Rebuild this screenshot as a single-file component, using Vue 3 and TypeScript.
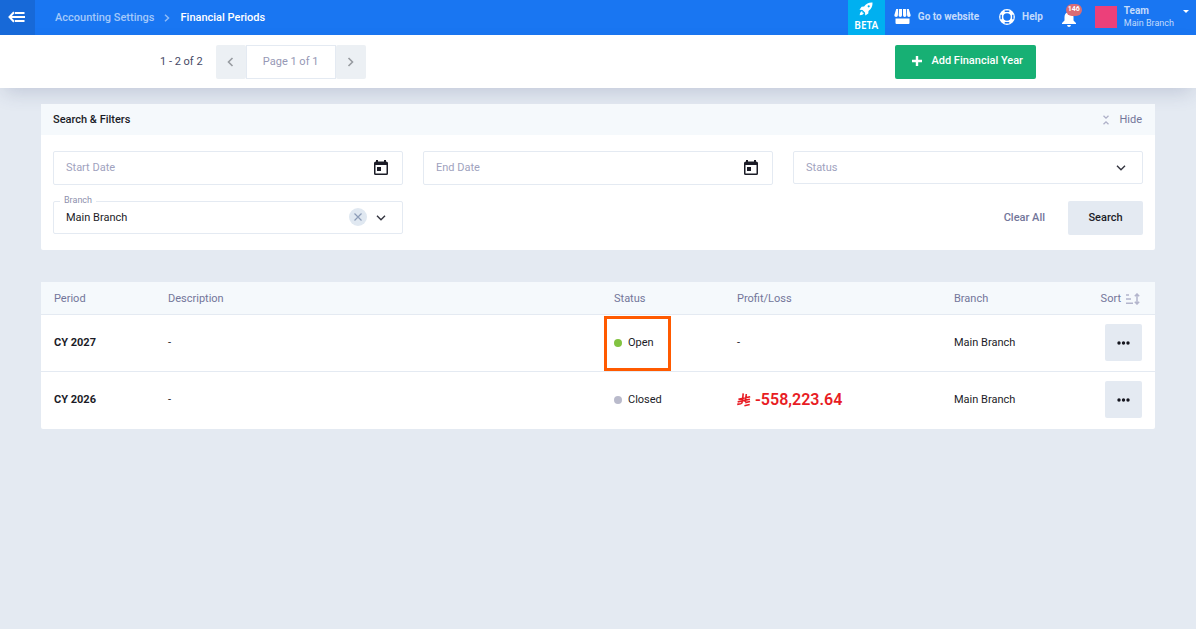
<script setup lang="ts">
import { ref } from 'vue'

interface Period {
  name: string
  description: string
  status: 'Open' | 'Closed'
  amount: string | null
  branch: string
  highlighted: boolean
}

const periods: Period[] = [
  { name: 'CY 2027', description: '-', status: 'Open', amount: null, branch: 'Main Branch', highlighted: true },
  { name: 'CY 2026', description: '-', status: 'Closed', amount: '-558,223.64', branch: 'Main Branch', highlighted: false },
]

const startDate = ref('')
const endDate = ref('')
const status = ref('')
const branch = ref('main')

function clearAll(): void {
  startDate.value = ''
  endDate.value = ''
  status.value = ''
  branch.value = ''
}
</script>

<template>
  <div class="page">
    <header class="topbar">
      <button class="menu" type="button" aria-label="Collapse menu">
        <svg width="17" height="12" viewBox="0 0 17 12" fill="none" stroke="#fff" stroke-width="2">
          <path d="M6 1.200 1.500 6 6 10.800M1.500 6H17M7 2h9.500M7 10h9.500" />
        </svg>
      </button>
      <nav class="crumbs" aria-label="Breadcrumb">
        <a href="#settings">Accounting Settings</a>
        <svg width="6" height="8" viewBox="0 0 6 8" fill="none" stroke="#8fbcf9" stroke-width="1.500">
          <path d="m1 .8 3.500 3.200L1 7.200" />
        </svg>
        <span class="current">Financial Periods</span>
      </nav>
      <a class="beta" href="#beta">
        <svg width="14" height="14" viewBox="0 0 14 14" fill="#fff">
          <path fill-rule="evenodd" d="M13.500.5c.2 3.600-1 6.300-4 8.400l-.2 2.500-3 2.100-.3-3L3.500 8l-3-.3 2.100-3 2.500-.2C7.200 1.500 9.900.3 13.500.5ZM9.700 3.200a1.100 1.100 0 1 0 0 2.200 1.100 1.100 0 0 0 0-2.200Z" />
          <path d="M2.800 9.200c-1.300.5-1.900 1.900-2.100 4.100 2.200-.2 3.600-.8 4.100-2.100l-.8-.8-1.200 1 1-1.300Z" />
        </svg>
        <span>BETA</span>
      </a>
      <a class="link site" href="#website">
        <svg width="17" height="15" viewBox="0 0 17 15" fill="#fff">
          <path d="M2.200 0H4.200L3.900 6.300a1.750 1.750 0 0 1-3.600 0ZM5.100 0h2.900v6.300a1.700 1.700 0 0 1-3.400 0ZM9 0h2.900l.5 6.300a1.700 1.700 0 0 1-3.400 0ZM12.800 0h2l1.900 6.300a1.750 1.750 0 0 1-3.600 0Z" />
          <path d="M1.500 9.500h14V14q0 1-1 1h-12q-1 0-1-1Z" />
        </svg>
        <span>Go to website</span>
      </a>
      <a class="link help" href="#help">
        <svg width="16" height="16" viewBox="0 0 16 16">
          <circle cx="8" cy="8" r="5.800" fill="none" stroke="#fff" stroke-width="4.200" />
          <path d="M5.700 2.200h4.600M5.700 13.800h4.600M2.200 5.700v4.600M13.800 5.700v4.600" stroke="#1976f2" stroke-width="1.400" />
        </svg>
        <span>Help</span>
      </a>
      <button class="bell" type="button" aria-label="Notifications">
        <svg width="16" height="16" viewBox="0 0 16 16" fill="#fff">
          <path d="M8 0q1.200 0 1.200 1.300C11.500 2 12.500 3.800 12.500 6v3.500L15 12v1H1v-1l2.500-2.500V6c0-2.200 1-4 3.300-4.700Q6.800 0 8 0ZM6 14h4q-.4 2-2 2t-2-2Z" />
        </svg>
        <span class="count">146</span>
      </button>
      <button class="account" type="button">
        <span class="avatar"></span>
        <span class="who"><b>Team</b><span>Main Branch</span></span>
        <svg width="6" height="3" viewBox="0 0 6 3" fill="#fff"><path d="M0 0h6L3 3Z" /></svg>
      </button>
    </header>

    <div class="toolbar">
      <span class="range">1 - 2 of 2</span>
      <div class="pager">
        <button type="button" aria-label="Previous page">
          <svg width="7" height="10" viewBox="0 0 7 10" fill="none" stroke="#979ba0" stroke-width="1.600"><path d="M5.500 1 1.500 5l4 4" /></svg>
        </button>
        <span>Page 1 of 1</span>
        <button type="button" aria-label="Next page">
          <svg width="7" height="10" viewBox="0 0 7 10" fill="none" stroke="#979ba0" stroke-width="1.600"><path d="m1.500 1 4 4-4 4" /></svg>
        </button>
      </div>
      <button class="add" type="button">
        <svg width="10" height="10" viewBox="0 0 10 10" stroke="#fff" stroke-width="2.400"><path d="M5 0v10M0 5h10" /></svg>
        Add Financial Year
      </button>
    </div>

    <main>
      <section class="card">
        <div class="card-head">
          <h2>Search &amp; Filters</h2>
          <button class="hide" type="button">
            <svg width="6" height="10" viewBox="0 0 6 10" fill="none" stroke="#aeb0c8" stroke-width="1.300"><path d="m.5.7 2.500 2.500L5.500.7M.5 9.300 3 6.800l2.500 2.500" /></svg>
            Hide
          </button>
        </div>
        <form class="filters" @submit.prevent>
          <div class="field">
            <input v-model="startDate" type="text" placeholder="Start Date" aria-label="Start Date" />
            <svg class="cal" width="14" height="15" viewBox="0 0 14 15" fill="#1b1c27">
              <path fill-rule="evenodd" d="M2 0h2v1.500h6V0h2v1.500q2 0 2 1.500v10.500q0 1.500-1.500 1.500h-11Q0 15 0 13.500V3q0-1.500 2-1.500ZM1.500 5v8.500h11V5Z" />
              <path d="M3 7h4v4H3Z" />
            </svg>
          </div>
          <div class="field">
            <input v-model="endDate" type="text" placeholder="End Date" aria-label="End Date" />
            <svg class="cal" width="14" height="15" viewBox="0 0 14 15" fill="#1b1c27">
              <path fill-rule="evenodd" d="M2 0h2v1.500h6V0h2v1.500q2 0 2 1.500v10.500q0 1.500-1.500 1.500h-11Q0 15 0 13.500V3q0-1.500 2-1.500ZM1.500 5v8.500h11V5Z" />
              <path d="M3 7h4v4H3Z" />
            </svg>
          </div>
          <div class="field short">
            <select v-model="status" aria-label="Status" :class="{ empty: !status }">
              <option value="">Status</option>
              <option value="open">Open</option>
              <option value="closed">Closed</option>
            </select>
            <svg class="chev" width="10" height="6" viewBox="0 0 10 6" fill="none" stroke="#33343f" stroke-width="1.400"><path d="m1 .8 4 4 4-4" /></svg>
          </div>
          <div class="field short">
            <label for="branch">Branch</label>
            <select id="branch" v-model="branch">
              <option value=""></option>
              <option value="main">Main Branch</option>
            </select>
            <button class="clear" type="button" aria-label="Clear branch" @click="branch = ''">
              <svg width="8" height="8" viewBox="0 0 8 8" stroke="#8d9db8" stroke-width="1.200"><path d="m.5.5 7 7M7.500.5l-7 7" /></svg>
            </button>
            <svg class="chev" width="10" height="6" viewBox="0 0 10 6" fill="none" stroke="#33343f" stroke-width="1.400"><path d="m1 .8 4 4 4-4" /></svg>
          </div>
          <div class="actions">
            <button class="clear-all" type="button" @click="clearAll">Clear All</button>
            <button class="search" type="submit">Search</button>
          </div>
        </form>
      </section>

      <table class="card">
        <colgroup>
          <col class="c-period" /><col /><col class="c-status" /><col class="c-amount" /><col class="c-branch" /><col class="c-sort" />
        </colgroup>
        <thead>
          <tr>
            <th>Period</th>
            <th>Description</th>
            <th>Status</th>
            <th>Profit/Loss</th>
            <th>Branch</th>
            <th class="end">
              <button class="sort" type="button">
                Sort
                <svg width="14" height="12" viewBox="0 0 14 12" fill="none" stroke="#b3b5cc" stroke-width="1.500">
                  <path d="M0 2h3M0 6h5M0 10.200h7M11 1v10M8.800 3.200 11 1l2.200 2.200M8.800 8.800 11 11l2.200-2.200" />
                </svg>
              </button>
            </th>
          </tr>
        </thead>
        <tbody>
          <tr v-for="p in periods" :key="p.name">
            <td><strong>{{ p.name }}</strong></td>
            <td>{{ p.description }}</td>
            <td class="status" :class="{ marked: p.highlighted }">
              <i class="dot" :class="p.status.toLowerCase()"></i>{{ p.status }}
            </td>
            <td>
              <span v-if="p.amount" class="loss">
                <svg width="14" height="14" viewBox="0 0 14 14" fill="none" stroke="#e81c24" stroke-width="1.600" aria-label="SAR">
                  <path d="M6.200.3 5.400 8.500q-.2 1.800-1.700 2.200L.2 11.400M9.300 1 8.300 9.200M1.400 6.300l11.800-2.600M.7 8.900l12.200-2.600M8.200 9.600l4.900-1.100M7.400 12.700l5.300-1.200" />
                </svg>
                {{ p.amount }}
              </span>
              <template v-else>-</template>
            </td>
            <td>{{ p.branch }}</td>
            <td class="end">
              <button class="more" type="button" aria-label="More actions">
                <svg width="13" height="4" viewBox="0 0 13 4" fill="#15161f"><circle cx="2" cy="2" r="1.700" /><circle cx="6.500" cy="2" r="1.700" /><circle cx="11" cy="2" r="1.700" /></svg>
              </button>
            </td>
          </tr>
        </tbody>
      </table>
    </main>
  </div>
</template>

<style>
body {
  background: #e4eaf2;
}
</style>

<style scoped>
.page {
  font: 11px/16px Roboto, "Liberation Sans", sans-serif;
  color: #1b1c27;
}
.page *,
.page *::after {
  box-sizing: border-box;
}
button,
input,
select {
  font: inherit;
  color: inherit;
  border: 0;
  padding: 0;
  margin: 0;
  background: none;
}
a {
  color: inherit;
  text-decoration: none;
}
svg {
  display: block;
  flex: none;
}

.topbar {
  display: flex;
  align-items: center;
  height: 35px;
  background: #1976f2;
  color: #c3dbfc;
}
.menu {
  display: flex;
  align-items: center;
  justify-content: center;
  width: 35px;
  height: 35px;
  padding: 0 2px 1px 0;
  background: #1769d8;
}
.crumbs {
  display: flex;
  align-items: center;
  gap: 9px;
  margin: 0 auto 0 20px;
  font-weight: 500;
  color: #a3c8fa;
}
.current {
  color: #fff;
  margin-left: 2px;
}
.beta {
  display: flex;
  flex-direction: column;
  align-items: center;
  justify-content: space-between;
  width: 37px;
  height: 35px;
  padding: 2px 0 3px;
  background: #00b0f0;
  color: #fff;
  font: 600 10px/14px "Noto Sans", "Open Sans", sans-serif;
}
.link {
  display: flex;
  align-items: center;
  gap: 7px;
  padding-bottom: 2px;
  font-size: 10px;
  font-weight: 700;
}
.site {
  margin-left: 9px;
}
.help {
  margin-left: 20px;
}
.bell {
  position: relative;
  margin: 2px 0 0 18px;
}
.count {
  position: absolute;
  top: -7px;
  right: -5px;
  width: 16px;
  height: 12px;
  border-radius: 6px;
  background: #d96c75;
  color: #fff;
  font: 700 7px/11px Roboto, sans-serif;
  text-align: center;
}
.account {
  display: flex;
  align-items: center;
  margin: 0 7px 2px 18px;
  text-align: left;
}
.avatar {
  width: 22px;
  height: 22px;
  background: #ec407a;
}
.who {
  display: flex;
  flex-direction: column;
  margin: 0 9px 0 7px;
  font-size: 9px;
  line-height: 12px;
}
.who b {
  font-size: 10px;
  font-weight: 700;
}
.account svg {
  align-self: flex-start;
  margin-top: 5px;
}

.toolbar {
  display: flex;
  align-items: center;
  height: 53px;
  padding: 0 160px;
  background: #fff;
  box-shadow: 0 8px 20px -4px rgba(50, 60, 110, 0.2);
}
.range {
  color: #474a66;
}
.pager {
  display: flex;
  height: 34px;
  margin: 0 auto 0 13px;
  line-height: 32px;
  color: #9698b5;
}
.pager span {
  min-width: 90px;
  border: 1px solid #e4eaf2;
  text-align: center;
}
.pager button {
  display: flex;
  align-items: center;
  justify-content: center;
  width: 30px;
  background: #ecf0f4;
  border-radius: 2px;
}
.add {
  display: flex;
  align-items: center;
  gap: 9px;
  height: 34px;
  padding: 0 13px 1px 17px;
  background: #17b074;
  border-radius: 2px;
  color: #fff;
  font-weight: 500;
}

main {
  position: relative;
  padding: 16px 41px;
}
.card {
  background: #fff;
  border-radius: 2px;
}
.card-head {
  display: flex;
  align-items: center;
  justify-content: space-between;
  height: 31px;
  padding: 0 13px 0 12px;
  background: #f5f9fc;
}
h2 {
  margin: 0;
  padding-top: 1px;
  font-size: 11px;
  font-weight: 500;
}
.hide {
  display: flex;
  align-items: center;
  gap: 10px;
  color: #73769a;
}
.filters {
  display: grid;
  grid-template-columns: repeat(3, 1fr);
  gap: 16px 20px;
  padding: 16px 12px 15px;
}
.field {
  position: relative;
  height: 34px;
  border: 1px solid #e4eaf2;
  border-radius: 2px;
}
.short {
  height: 33px;
}
.field input,
.field select {
  display: block;
  appearance: none;
  width: 100%;
  height: 100%;
  padding: 0 50px 0 12px;
}
.field input {
  padding-bottom: 2px;
}
.field input::placeholder {
  color: #a0a2be;
  opacity: 1;
}
.field select.empty {
  color: #a0a2be;
}
.field label {
  position: absolute;
  top: -8px;
  left: 6px;
  padding: 0 4px;
  background: #fff;
  color: #8e90ad;
  font-size: 9px;
  line-height: 12px;
}
.cal,
.chev,
.clear {
  position: absolute;
  top: 0;
  bottom: 0;
  margin: auto 0;
}
.cal {
  right: 14px;
  bottom: 2px;
}
.chev {
  right: 16px;
  pointer-events: none;
}
.clear {
  right: 35px;
  bottom: 1px;
  display: flex;
  align-items: center;
  justify-content: center;
  width: 18px;
  height: 18px;
  border-radius: 50%;
  background: #e0e8f1;
}
.actions {
  grid-column: 3;
  display: flex;
  justify-content: flex-end;
  gap: 23px;
}
.clear-all {
  color: #73769a;
  font-weight: 500;
}
.search {
  min-width: 75px;
  height: 34px;
  background: #e4eaf2;
  border-radius: 2px;
  font-weight: 500;
}

table {
  width: 100%;
  margin-top: 32px;
  table-layout: fixed;
  border-spacing: 0;
}
.c-period {
  width: 114px;
}
.c-status {
  width: 123px;
}
.c-amount {
  width: 217px;
}
.c-branch {
  width: 139px;
}
.c-sort {
  width: 75px;
}
th {
  height: 33px;
  padding: 1px 13px 0;
  background: #f5f9fc;
  border-bottom: 1px solid #e4eaf2;
  color: #73769a;
  font-weight: 400;
  text-align: left;
}
td {
  height: 57px;
  padding: 0 13px;
  border-bottom: 1px solid #e4eaf2;
}
td strong {
  font-weight: 700;
}
tr:last-child td {
  border-bottom-color: transparent;
}
.end {
  text-align: right;
}
th.end {
  padding-right: 15px;
}
td.end {
  padding-bottom: 1px;
}
.sort {
  display: inline-flex;
  align-items: center;
  gap: 5px;
  vertical-align: middle;
}
.status {
  position: relative;
}
.dot {
  display: inline-block;
  width: 8px;
  height: 8px;
  margin-right: 6px;
  border-radius: 50%;
  vertical-align: -1px;
}
.dot.open {
  background: #82c341;
}
.dot.closed {
  background: #b9bacb;
}
.marked::after {
  content: "";
  position: absolute;
  top: 1px;
  left: 3px;
  width: 67px;
  height: 55px;
  border: 3px solid #ff5a00;
}
.loss {
  display: flex;
  align-items: center;
  gap: 4px;
  color: #e81c24;
  font-size: 16px;
  font-weight: 600;
}
.more {
  display: inline-flex;
  align-items: center;
  justify-content: center;
  width: 37px;
  height: 37px;
  background: #e4eaf2;
  border-radius: 2px;
  vertical-align: middle;
}
</style>
